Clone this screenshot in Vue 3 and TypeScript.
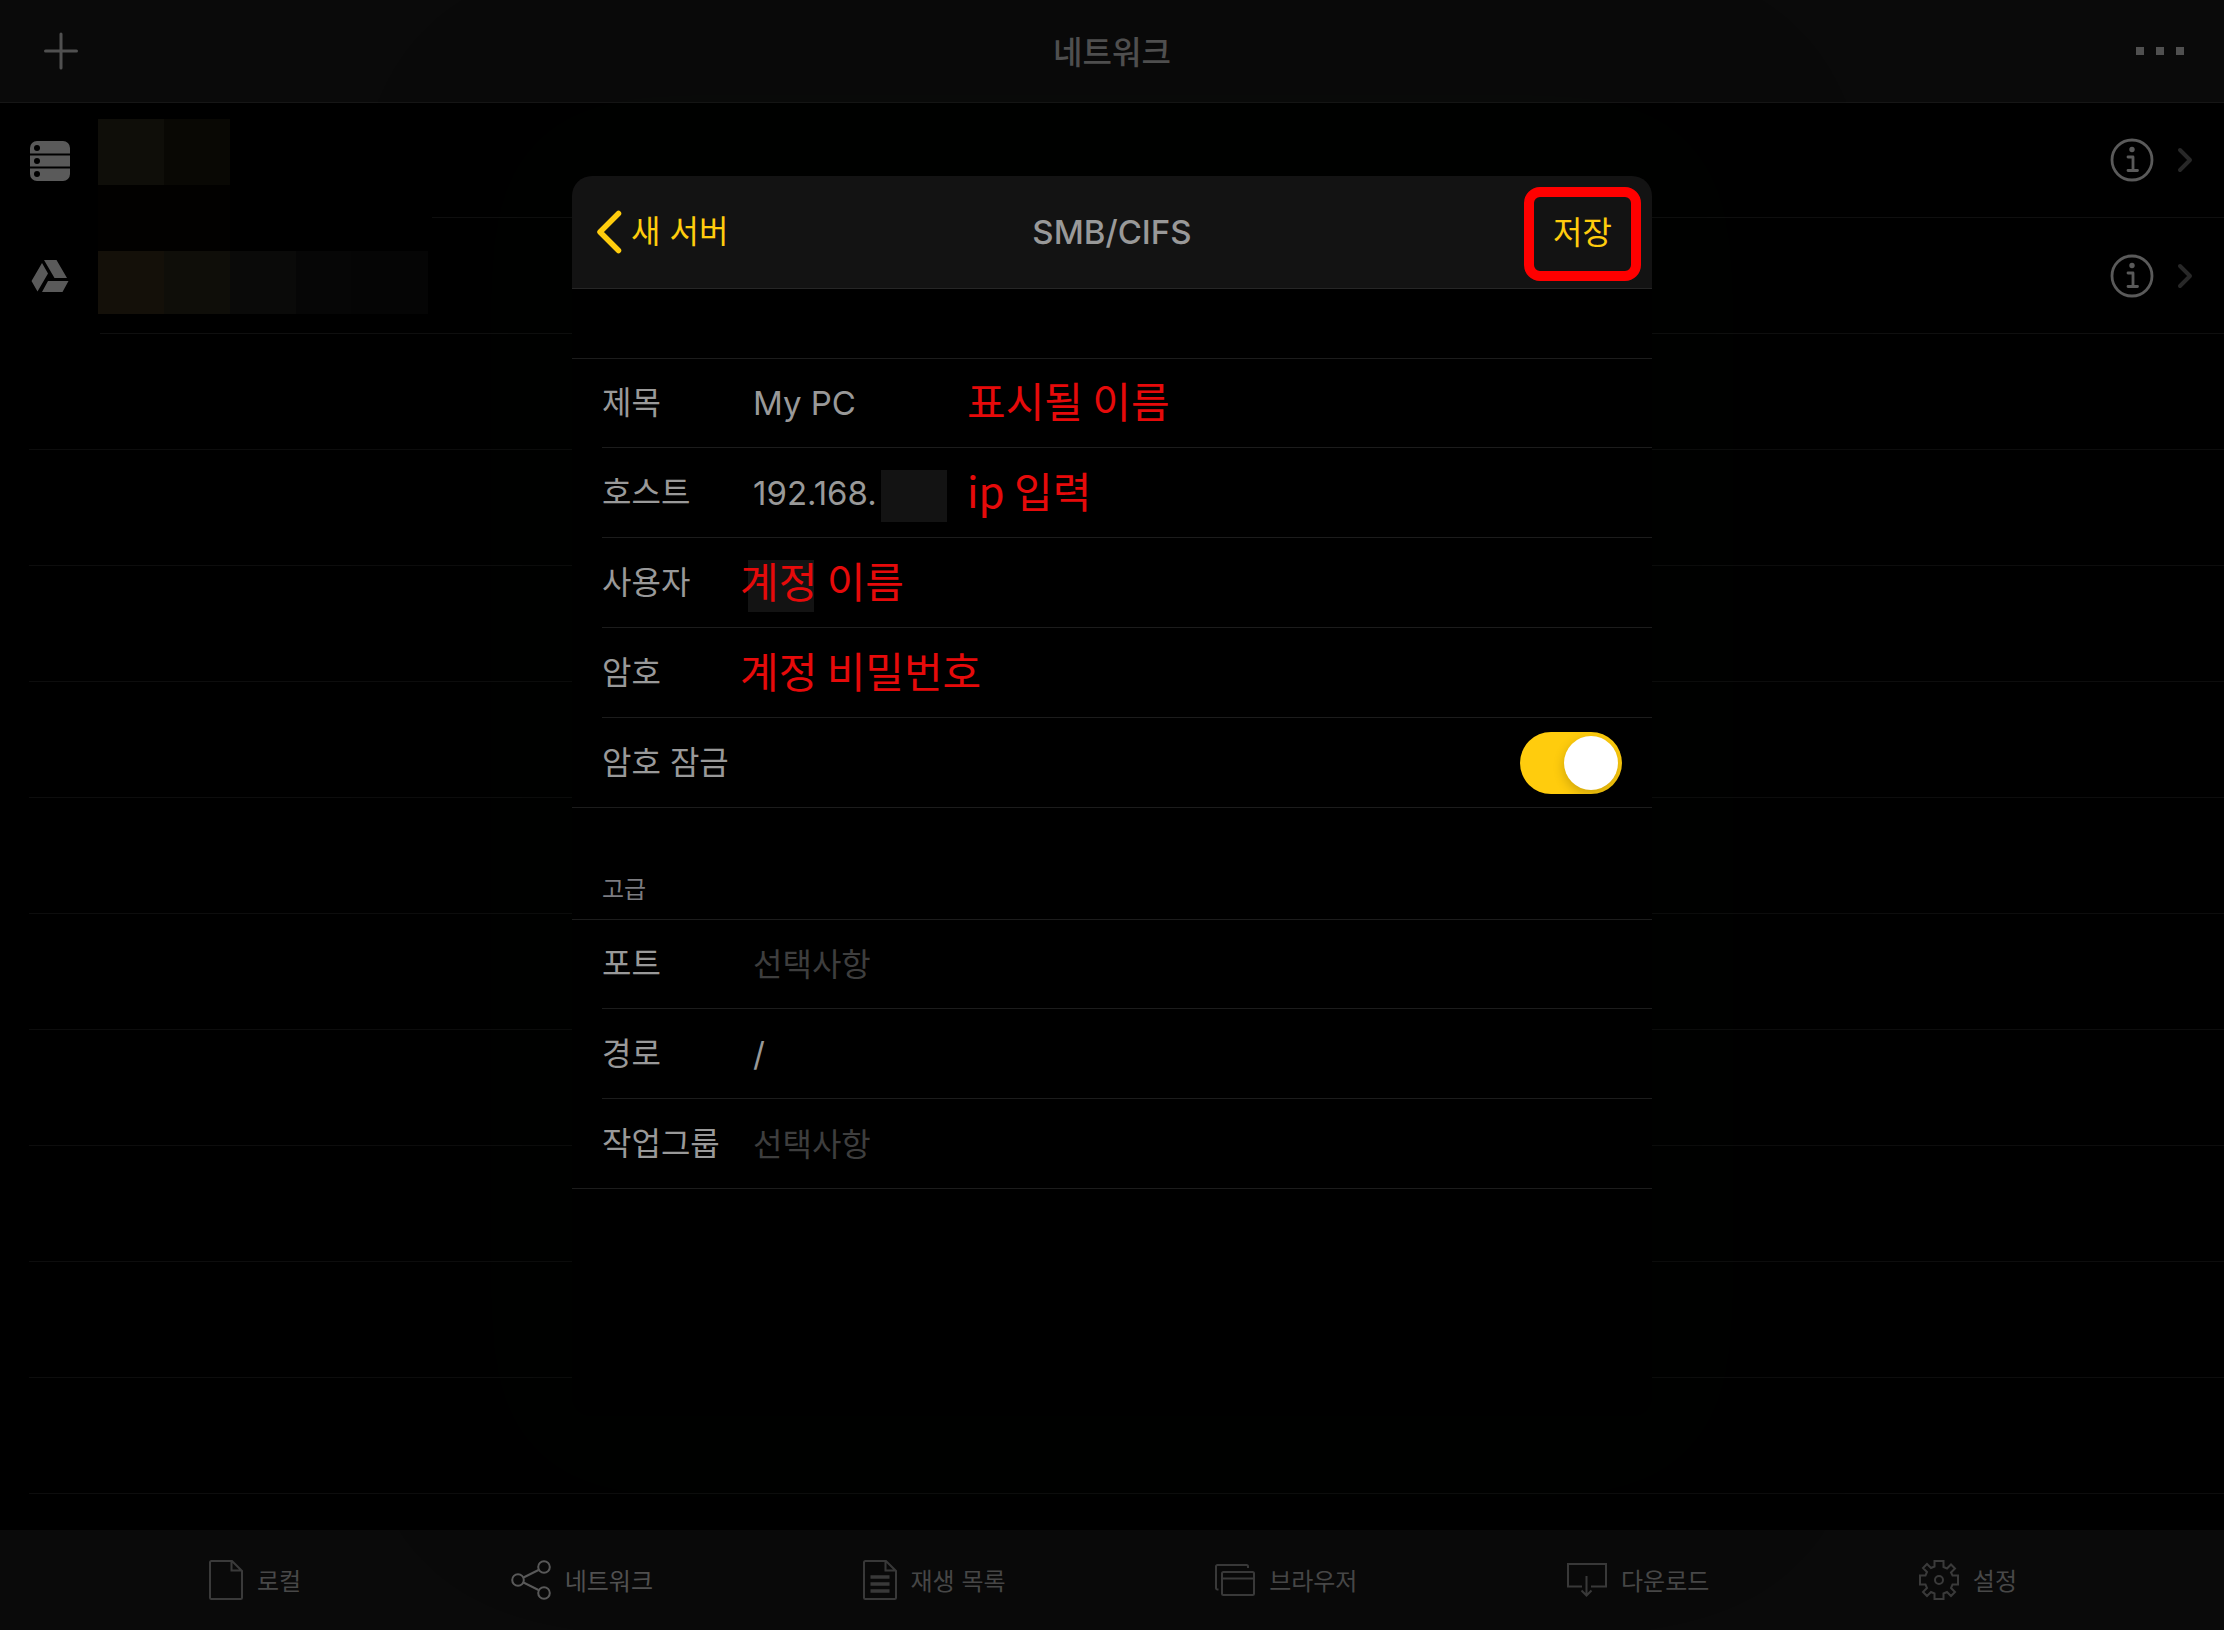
<script setup lang="ts">
import { ref } from 'vue'

interface Server { id: string; kind: 'server' | 'drive'; label: string }
interface Field {
  id: string
  label: string
  type?: string
  placeholder?: string
  note?: string
  noteAt?: 'far' | 'near'
  mask?: 'host' | 'user'
}
interface Tab { id: string; label: string; active?: boolean; w: number }

const servers: Server[] = [
  { id: 's1', kind: 'server', label: '서버' },
  { id: 's2', kind: 'drive', label: '드라이브' },
]
const emptyRows = 10

const account: Field[] = [
  { id: 'title', label: '제목', note: '표시될 이름', noteAt: 'far' },
  { id: 'host', label: '호스트', note: 'ip 입력', noteAt: 'far', mask: 'host' },
  { id: 'user', label: '사용자', note: '계정 이름', noteAt: 'near', mask: 'user' },
  { id: 'password', label: '암호', type: 'password', note: '계정 비밀번호', noteAt: 'near' },
]
const advanced: Field[] = [
  { id: 'port', label: '포트', placeholder: '선택사항' },
  { id: 'path', label: '경로' },
  { id: 'workgroup', label: '작업그룹', placeholder: '선택사항' },
]
const values = ref<Record<string, string>>({
  title: 'My PC', host: '192.168.', user: '', password: '', port: '', path: '/', workgroup: '',
})
const locked = ref(true)

const tabs: Tab[] = [
  { id: 'local', label: '로컬', w: 34 },
  { id: 'network', label: '네트워크', active: true, w: 40 },
  { id: 'playlist', label: '재생 목록', w: 34 },
  { id: 'browser', label: '브라우저', w: 40 },
  { id: 'download', label: '다운로드', w: 40 },
  { id: 'settings', label: '설정', w: 40 },
]
</script>

<template>
  <div class="app">
    <header class="topbar">
      <button class="icon-btn" aria-label="추가">
        <svg width="34" height="38" viewBox="0 0 34 38"><path d="M17 2v34M1.500 19h31" stroke="#505050" stroke-width="3" stroke-linecap="round" /></svg>
      </button>
      <h1>네트워크</h1>
      <button class="icon-btn" aria-label="더 보기">
        <svg width="48" height="8" viewBox="0 0 48 8" fill="#505050"><path d="M0 0h8v8H0zM20 0h8v8h-8zM40 0h8v8h-8z" /></svg>
      </button>
    </header>

    <main class="list">
      <div v-for="s in servers" :key="s.id" class="server-row" :class="s.kind">
        <svg v-if="s.kind === 'server'" class="kind" width="40" height="40" viewBox="0 0 40 40" fill="#5a5a5a">
          <path d="M0 12.500V7a7 7 0 0 1 7-7h26a7 7 0 0 1 7 7v5.500H0zM0 14.500h40v11H0zM0 27.500h40V33a7 7 0 0 1-7 7H7a7 7 0 0 1-7-7z" />
          <g fill="#000"><circle cx="7" cy="7" r="3" /><circle cx="7" cy="20" r="3" /><circle cx="7" cy="33" r="3" /></g>
        </svg>
        <svg v-else class="kind" width="40" height="34" viewBox="0 0 40 34" fill="#5a5a5a">
          <path d="M14 1h12.500L37 19H24.500zM12 4L18 14.500 7.500 32.500 1.500 22zM18 22h20.500L32.500 33H12z" />
        </svg>
        <div class="server-body">
          <button class="icon-btn" :aria-label="s.label + ' 정보'">
            <svg width="44" height="44" viewBox="0 0 44 44" fill="none" stroke="#5a5a5a" stroke-width="2.800">
              <circle cx="22" cy="22" r="20" />
              <path d="M18 19h5v13M18 32.500h9.500" stroke-linecap="round" stroke-linejoin="round" />
              <circle cx="22" cy="11.500" r="2.700" fill="#5a5a5a" stroke="none" />
            </svg>
          </button>
          <svg class="chev" width="16" height="26" viewBox="0 0 16 26"><path d="M3 3l10 10L3 23" fill="none" stroke="#282828" stroke-width="4" stroke-linecap="round" stroke-linejoin="round" /></svg>
        </div>
      </div>
      <div v-for="n in emptyRows" :key="n" class="empty-row"></div>

      <div class="mosaic" aria-hidden="true">
        <i class="a"></i><i class="b"></i><i></i><i></i><i></i>
        <i class="c"></i><i class="c"></i><i></i><i></i><i></i>
        <i class="d"></i><i class="a"></i><i class="e"></i><i class="f"></i><i class="f"></i>
      </div>
    </main>

    <nav class="tabs">
      <a v-for="t in tabs" :key="t.id" href="#" class="tab" :class="{ active: t.active }">
        <svg :width="t.w" height="40" :viewBox="`0 0 ${t.w} 40`" fill="none" stroke="currentColor" stroke-width="2">
          <path v-if="t.id === 'local'" d="M2.500 1H23l10 10v26.500a1.500 1.500 0 0 1-1.500 1.500h-29A1.500 1.500 0 0 1 1 37.500v-35A1.500 1.500 0 0 1 2.500 1zM22.500 1v9.500H33" />
          <template v-else-if="t.id === 'network'">
            <circle cx="7" cy="20" r="5.800" /><circle cx="33" cy="7" r="5.800" /><circle cx="33" cy="33" r="5.800" />
            <path d="M12.500 17.500l15-7.500M12.500 22.500l15 7.500" />
          </template>
          <template v-else-if="t.id === 'playlist'">
            <path d="M2.500 1H23l10 10v26.500a1.500 1.500 0 0 1-1.500 1.500h-29A1.500 1.500 0 0 1 1 37.500v-35A1.500 1.500 0 0 1 2.500 1zM22.500 1v9.500H33" />
            <path d="M7.500 17h19M7.500 24h19M7.500 31h19" stroke-width="3.500" />
          </template>
          <template v-else-if="t.id === 'browser'">
            <path d="M3.500 29.500H2.500A1.500 1.500 0 0 1 1 28V6.500A1.500 1.500 0 0 1 2.500 5h29A1.500 1.500 0 0 1 33 6.500V8" />
            <rect x="7" y="12" width="32" height="23" rx="1.500" /><path d="M7 18.500h32" />
          </template>
          <path v-else-if="t.id === 'download'" d="M15 26.500H1V4h38v22.500H24M19.500 16v19M14.500 30.500l5 5 5-5" />
          <template v-else>
            <path d="M15.500 1h9v6l3.500 1.500 4-4L36 8.500l-4 4L33.500 15.500H39v9h-5.500L32 28l4 4-4 4-4-4-3.500 1.500V39h-9v-5.500L12 32l-4 4-4-4 4-4-1.500-3.500H1v-9h5.500L8 12 4 8l4-4 4 4 3.500-1.500z" />
            <circle cx="20" cy="20" r="4" />
          </template>
        </svg>
        <span>{{ t.label }}</span>
      </a>
    </nav>

    <form class="sheet" @submit.prevent>
      <header class="sheet-bar">
        <button type="button" class="back">
          <svg width="26" height="44" viewBox="0 0 26 44"><path d="M22.500 3.500L4 22l18.500 18.500" fill="none" stroke="#ffcc0d" stroke-width="5.500" stroke-linecap="round" stroke-linejoin="round" /></svg>
          새 서버
        </button>
        <h2>SMB/CIFS</h2>
        <button type="submit" class="save">저장</button>
      </header>

      <section class="group first">
        <div v-for="f in account" :key="f.id" class="field">
          <label :for="f.id">{{ f.label }}</label>
          <input :id="f.id" v-model="values[f.id]" :type="f.type ?? 'text'" :placeholder="f.placeholder">
          <i v-if="f.mask" class="mask" :class="f.mask"></i>
          <span v-if="f.note" class="note" :class="f.noteAt">{{ f.note }}</span>
        </div>
        <div class="field">
          <label for="lock" class="wide">암호 잠금</label>
          <input id="lock" v-model="locked" class="switch" type="checkbox">
        </div>
      </section>

      <h3>고급</h3>
      <section class="group">
        <div v-for="f in advanced" :key="f.id" class="field">
          <label :for="f.id">{{ f.label }}</label>
          <input :id="f.id" v-model="values[f.id]" type="text" :placeholder="f.placeholder">
        </div>
      </section>
    </form>
  </div>
</template>

<style>
body { margin: 0; background: #000; }
</style>

<style scoped>
* { box-sizing: border-box; }
.app {
  position: relative;
  min-height: 100vh;
  display: flex;
  flex-direction: column;
  background: #000;
  color: #999;
  font-family: Inter, "Noto Sans CJK KR", sans-serif;
  font-size: 32px;
  overflow: hidden;
}
h1, h2, h3 { margin: 0; font-weight: 500; }
button {
  padding: 0;
  border: 0;
  background: none;
  font: inherit;
  color: inherit;
  cursor: pointer;
}
svg { display: block; flex: none; }
.icon-btn { flex: none; }

.topbar {
  display: flex;
  align-items: center;
  justify-content: space-between;
  height: 103px;
  padding: 0 40px 0 44px;
  background: #0a0a0a;
  border-bottom: 1px solid #161616;
}
.topbar h1 {
  position: absolute;
  left: 50%;
  transform: translateX(-50%);
  padding-bottom: 2px;
  font-family: "Noto Sans CJK KR", sans-serif;
  font-size: 32px;
  line-height: 48px;
  color: #525252;
}

.list { position: relative; flex: 1; }
.server-row {
  display: flex;
  align-items: center;
  height: 116px;
  padding-left: 30px;
}
.server-row.server { height: 115px; }
.server-body {
  display: flex;
  flex: 1;
  align-items: center;
  justify-content: flex-end;
  gap: 23px;
  height: 100%;
  margin-left: 30px;
  padding-right: 31px;
  border-bottom: 1px solid #0f0f0f;
}
.empty-row {
  height: 116px;
  margin-left: 29px;
  border-bottom: 1px solid #0d0d0d;
}
.mosaic {
  position: absolute;
  top: 16px;
  left: 98px;
  display: grid;
  grid-template-columns: repeat(5, 66px);
  grid-template-rows: 66px 66px 63px;
  padding-right: 4px;
  background: #000;
}
.mosaic .a { background: #0f0e09; }
.mosaic .b { background: #090804; }
.mosaic .c { background: #020100; }
.mosaic .d { background: #141009; }
.mosaic .e { background: #0a0a09; }
.mosaic .f { background: #060606; }

.tabs {
  display: flex;
  align-items: center;
  justify-content: space-between;
  height: 100px;
  padding: 0 207px 0 209px;
  background: #0a0a0a;
}
.tab {
  display: flex;
  align-items: center;
  gap: 14px;
  font-size: 24px;
  line-height: 40px;
  color: #3a3a3a;
  text-decoration: none;
}
.tab span { padding-top: 3px; color: #484848; }
.tab.active { color: #5a5a5a; }
.tab.active span { color: #525252; }

.sheet {
  position: absolute;
  top: 176px;
  left: 50%;
  width: 1080px;
  max-width: 100%;
  min-height: 1240px;
  transform: translateX(-50%);
  background: #000;
  border-radius: 20px;
  box-shadow: 0 0 160px 80px rgba(8, 20, 0, 0.12);
  overflow: hidden;
}
.sheet-bar {
  position: relative;
  display: flex;
  align-items: center;
  justify-content: space-between;
  height: 113px;
  padding: 0 11px 0 24px;
  background: #131313;
  border-bottom: 1px solid #262626;
}
.sheet-bar h2 {
  position: absolute;
  left: 50%;
  transform: translateX(-50%);
  font-size: 33px;
  font-weight: 500;
  line-height: 48px;
}
.back {
  display: flex;
  align-items: center;
  gap: 9px;
  color: #ffcc0d;
  line-height: 48px;
}
.save {
  width: 117px;
  height: 94px;
  margin-top: 4px;
  padding-bottom: 8px;
  border: 10px solid #f00;
  border-radius: 16px;
  color: #ffcc0d;
}
.group {
  border-top: 1px solid #1c1c1c;
  border-bottom: 1px solid #1c1c1c;
}
.group.first { margin-top: 69px; }
.field {
  position: relative;
  display: flex;
  align-items: center;
  height: 90px;
  margin-left: 30px;
  padding-right: 30px;
  border-bottom: 1px solid #1c1c1c;
}
.field:first-child { height: 89px; }
.field:last-child { height: 89px; border-bottom: 0; }
.field label {
  width: 151px;
  line-height: 48px;
  white-space: nowrap;
}
.field label.wide { width: auto; flex: 1; }
.field input:not(.switch) {
  flex: 1;
  min-width: 0;
  height: 60px;
  padding: 0;
  border: 0;
  outline: 0;
  background: none;
  font: inherit;
  font-size: 33px;
  color: #999;
}
.field input::placeholder { color: #3e3e3e; font-size: 32px; opacity: 1; }
.note {
  position: absolute;
  padding-bottom: 6px;
  font-family: "Noto Sans CJK KR", sans-serif;
  font-size: 42px;
  font-weight: 400;
  line-height: 60px;
  color: #e60a0a;
  white-space: nowrap;
}
.note.far { left: 365px; }
.note.near { left: 138px; }
.mask {
  position: absolute;
  top: 22px;
  width: 66px;
  height: 52px;
  background: #131313;
}
.mask.host { left: 279px; }
.mask.user { left: 146px; }
.switch {
  position: relative;
  appearance: none;
  flex: none;
  width: 102px;
  height: 62px;
  margin: 0;
  border-radius: 31px;
  background: #333;
}
.switch::after {
  content: "";
  position: absolute;
  top: 4px;
  left: 4px;
  width: 54px;
  height: 54px;
  border-radius: 50%;
  background: #fff;
  box-shadow: 0 4px 12px rgba(0, 0, 0, 0.2);
}
.switch:checked { background: #ffcc0d; }
.switch:checked::after { left: 44px; }
h3 {
  height: 111px;
  padding: 64px 30px 0;
  font-size: 24px;
  font-weight: 400;
  line-height: 36px;
  color: #7c7c80;
}
</style>
